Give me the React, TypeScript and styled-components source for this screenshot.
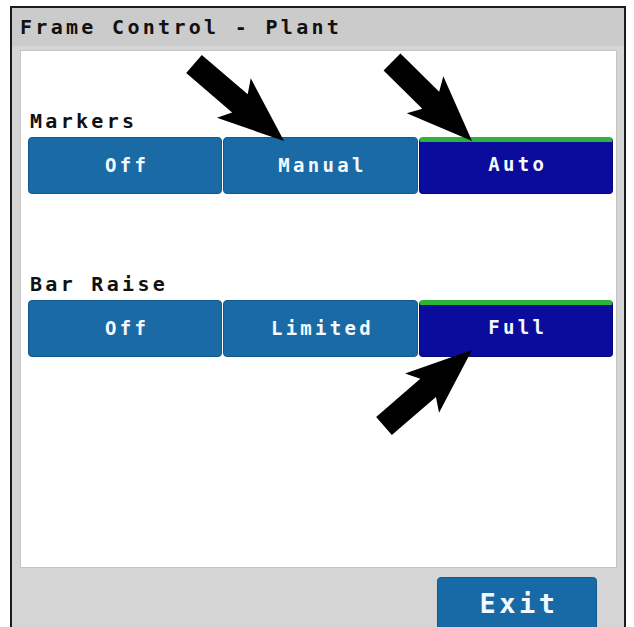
import styled, { createGlobalStyle } from "styled-components";

const GlobalStyle = createGlobalStyle`
  html, body {
    margin: 0;
    padding: 0;
    background: #ffffff;
  }
  body {
    font-family: "DejaVu Sans Mono", "Liberation Mono", monospace;
  }
`;

const Window = styled.div`
  position: relative;
  width: 612px;
  height: 621px;
  margin: 6px 0 0 10px;
  border: 2px solid #1c1c1c;
  border-bottom: none;
  background: #d5d5d5;
  display: flex;
  flex-direction: column;
  overflow: hidden;
`;

const TitleBar = styled.div`
  height: 38px;
  flex-shrink: 0;
  background: #cbcbcb;
  display: flex;
  align-items: center;
  padding-left: 8px;
  font-weight: bold;
  font-size: 20px;
  letter-spacing: 3.3px;
  color: #111;
`;

const Panel = styled.div`
  height: 516px;
  flex-shrink: 0;
  margin: 4px 7px 0 8px;
  background: #ffffff;
  border: 1px solid #c4c4c4;
  padding: 0 3px 0 7px;
  display: flex;
  flex-direction: column;
`;

const Label = styled.div<{ $top: number }>`
  margin-top: ${(p) => p.$top}px;
  height: 22px;
  padding-left: 2px;
  font-weight: bold;
  font-size: 20px;
  letter-spacing: 3.3px;
  color: #111;
`;

const ButtonRow = styled.div`
  display: grid;
  grid-template-columns: repeat(3, 1fr);
  gap: 1px;
  height: 57px;
  margin-top: 6px;
`;

const Choice = styled.button<{ $active?: boolean }>`
  border: 1px solid ${(p) => (p.$active ? "#07077a" : "#125a8e")};
  border-top: ${(p) => (p.$active ? "5px solid #2cb43a" : "1px solid #125a8e")};
  border-radius: 4px;
  background: ${(p) => (p.$active ? "#0b0c9c" : "#1a6aa5")};
  color: #f4f8ff;
  font-family: inherit;
  font-weight: bold;
  font-size: 19px;
  letter-spacing: 3.3px;
  padding: 0 0 ${(p) => (p.$active ? "8px" : "2px")} 4px;
  cursor: pointer;
`;

const Footer = styled.div`
  flex: 1;
  display: flex;
  justify-content: flex-end;
  padding: 9px 27px 0 0;
`;

const ExitButton = styled.button`
  width: 160px;
  height: 60px;
  flex-shrink: 0;
  border: 1px solid #0f5b90;
  border-radius: 4px;
  background: #176aa5;
  color: #f4f8ff;
  font-family: inherit;
  font-weight: bold;
  font-size: 27px;
  letter-spacing: 3.5px;
  padding: 0 0 7px 4px;
`;

const Overlay = styled.svg`
  position: absolute;
  left: -12px;
  top: -8px;
  width: 634px;
  height: 627px;
  pointer-events: none;
`;

const Arrow = ({ x1, y1, x2, y2 }: { x1: number; y1: number; x2: number; y2: number }) => {
  const len = Math.hypot(x2 - x1, y2 - y1);
  const angle = (Math.atan2(y2 - y1, x2 - x1) * 180) / Math.PI;
  const h = 58;
  const points = [
    [0, -12],
    [len - h, -12],
    [len - h - 8, -26],
    [len, 0],
    [len - h - 8, 26],
    [len - h, 12],
    [0, 12],
  ]
    .map((p) => p.join(","))
    .join(" ");
  return (
    <polygon
      points={points}
      fill="#000"
      transform={`translate(${x1} ${y1}) rotate(${angle})`}
    />
  );
};

const App = () => (
  <>
    <GlobalStyle />
    <Window>
      <TitleBar>Frame Control - Plant</TitleBar>
      <Panel>
        <Label $top={58}>Markers</Label>
        <ButtonRow>
          <Choice>Off</Choice>
          <Choice>Manual</Choice>
          <Choice $active>Auto</Choice>
        </ButtonRow>
        <Label $top={78}>Bar Raise</Label>
        <ButtonRow>
          <Choice>Off</Choice>
          <Choice>Limited</Choice>
          <Choice $active>Full</Choice>
        </ButtonRow>
      </Panel>
      <Footer>
        <ExitButton>Exit</ExitButton>
      </Footer>
      <Overlay viewBox="0 0 634 627">
        <Arrow x1={194} y1={64} x2={284} y2={141} />
        <Arrow x1={392} y1={62} x2={472} y2={141} />
        <Arrow x1={384} y1={426} x2={472} y2={350} />
      </Overlay>
    </Window>
  </>
);

export default App;
